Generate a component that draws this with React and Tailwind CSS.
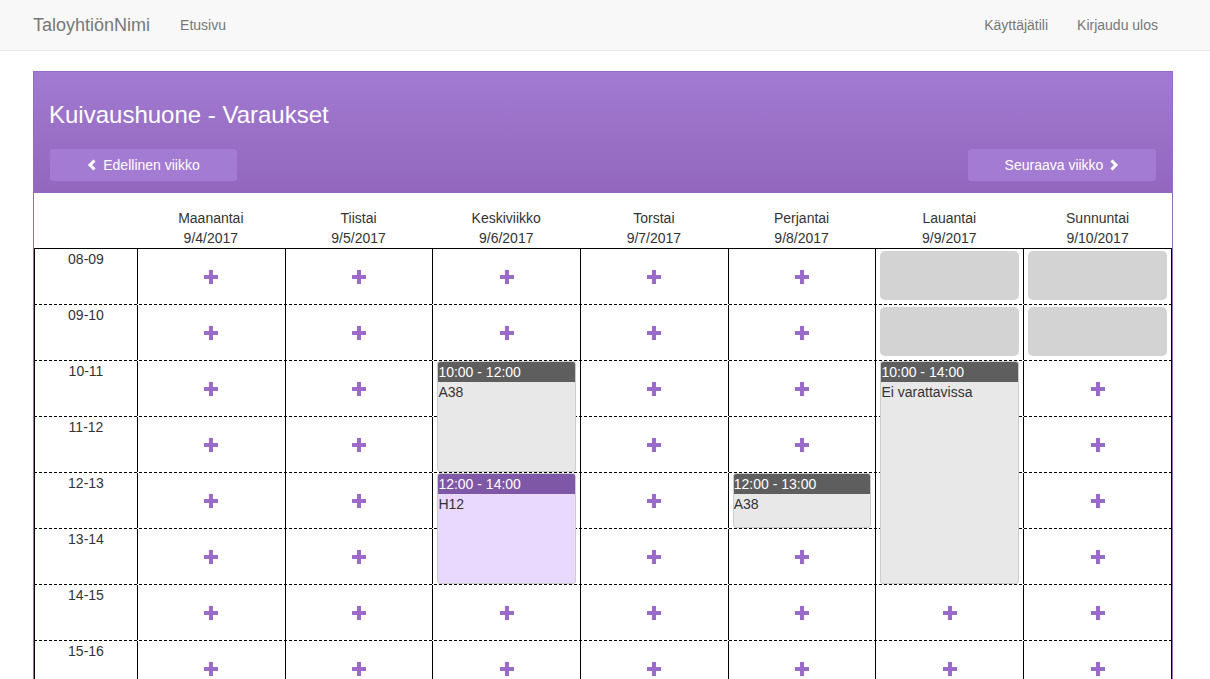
import React from 'react';

const days = [
  { name: 'Maanantai', date: '9/4/2017' },
  { name: 'Tiistai', date: '9/5/2017' },
  { name: 'Keskiviikko', date: '9/6/2017' },
  { name: 'Torstai', date: '9/7/2017' },
  { name: 'Perjantai', date: '9/8/2017' },
  { name: 'Lauantai', date: '9/9/2017' },
  { name: 'Sunnuntai', date: '9/10/2017' },
];

const hours = [8, 9, 10, 11, 12, 13, 14, 15, 16, 17, 18, 19, 20, 21];
const pad = n => String(n).padStart(2, '0');

// day index -> list of bookings (start hour, length in hours)
const bookings = [
  { day: 2, start: 10, len: 2, time: '10:00 - 12:00', text: 'A38', own: false },
  { day: 2, start: 12, len: 2, time: '12:00 - 14:00', text: 'H12', own: true },
  { day: 4, start: 12, len: 1, time: '12:00 - 13:00', text: 'A38', own: false },
  { day: 5, start: 10, len: 4, time: '10:00 - 14:00', text: 'Ei varattavissa', own: false },
];

const disabled = [
  { day: 5, hour: 8 }, { day: 5, hour: 9 },
  { day: 6, hour: 8 }, { day: 6, hour: 9 },
];

const PlusIcon = () => (
  <svg width="14" height="14" viewBox="0 0 14 14" className="block">
    <rect x="0" y="5" width="14" height="4" fill="#9b6bcc" />
    <rect x="5" y="0" width="4" height="14" fill="#9b6bcc" />
  </svg>
);

const Chevron = ({ dir }) => (
  <svg width="10" height="12" viewBox="0 0 10 12" className="block">
    {dir === 'left' ? (
      <polyline points="7.5,1.5 3,6 7.5,10.5" fill="none" stroke="white" strokeWidth="3" />
    ) : (
      <polyline points="2.5,1.5 7,6 2.5,10.5" fill="none" stroke="white" strokeWidth="3" />
    )}
  </svg>
);

const Booking = ({ b }) => (
  <div
    className={`absolute left-[4px] right-[4px] top-0 z-10 rounded-[3px] border border-[#cccccc] overflow-hidden ${b.own ? 'bg-[#ead9ff]' : 'bg-[#e8e8e8]'}`}
    style={{ height: b.len * 56 - 1 }}
  >
    <div className={`h-[20px] leading-[20px] text-white ${b.own ? 'bg-[#7e57a6]' : 'bg-[#5e5e5e]'}`}>{b.time}</div>
    <div className="leading-[20px] text-[#333]">{b.text}</div>
  </div>
);

const Cell = ({ day, hour, last }) => {
  const b = bookings.find(x => x.day === day && x.start === hour);
  const covered = bookings.some(x => x.day === day && hour >= x.start && hour < x.start + x.len);
  const isDisabled = disabled.some(x => x.day === day && x.hour === hour);
  return (
    <div className={`relative border-l border-black ${last ? 'border-r' : ''}`}>
      {b && <Booking b={b} />}
      {isDisabled && <div className="mx-[4px] mt-[2px] h-[49px] rounded-[5px] bg-[#d3d3d3]" />}
      {!covered && !isDisabled && (
        <div className="h-full flex items-center justify-center"><PlusIcon /></div>
      )}
    </div>
  );
};

export default function App() {
  return (
    <div className="min-h-screen bg-white text-[14px] text-[#333]" style={{ fontFamily: '"Liberation Sans", Arial, sans-serif' }}>
      {/* Navbar */}
      <nav className="h-[51px] bg-[#f8f8f8] border-b border-[#e7e7e7] flex items-center text-[#777]">
        <div className="pl-[33px] pr-[15px] text-[18px]">TaloyhtiönNimi</div>
        <div className="px-[15px]">Etusivu</div>
        <div className="flex-1" />
        <div className="pl-[15px] pr-[14px]">Käyttäjätili</div>
        <div className="pl-[15px] pr-[52px]">Kirjaudu ulos</div>
      </nav>

      {/* Panel */}
      <div className="ml-[33px] mt-[20px] w-[1140px] border border-[#9a6ac9] border-b-0">
        <div className="bg-gradient-to-b from-[#a27ad1] to-[#9267bd] px-[15px] pt-[30px] pb-[12px]">
          <h1 className="text-[24px] leading-[26px] text-white">Kuivaushuone - Varaukset</h1>
          <div className="mt-[21px] flex justify-between">
            <button className="w-[187px] h-[32px] ml-px rounded-[3px] bg-[#a47bd2] text-white flex items-center justify-center gap-[6px]">
              <Chevron dir="left" />
              <span>Edellinen viikko</span>
            </button>
            <button className="w-[188px] h-[32px] mr-px rounded-[3px] bg-[#a47bd2] text-white flex items-center justify-center gap-[6px]">
              <span>Seuraava viikko</span>
              <Chevron dir="right" />
            </button>
          </div>
        </div>

        {/* Header row */}
        <div className="grid grid-cols-[103px_repeat(6,147.7px)_1fr] pt-[15px] border-b border-black">
          <div />
          {days.map(d => (
            <div key={d.name} className="text-center leading-[20px]">
              <div>{d.name}</div>
              <div>{d.date}</div>
            </div>
          ))}
        </div>

        {/* Body */}
        {hours.map(h => (
          <div key={h} className="h-[56px] border-b border-dashed border-black">
            <div className="grid grid-cols-[103px_repeat(6,147.7px)_1fr] h-full">
              <div className="border-l border-black text-center leading-[20px]">{pad(h)}-{pad(h + 1)}</div>
              {days.map((d, i) => (
                <Cell key={d.name} day={i} hour={h} last={i === 6} />
              ))}
            </div>
          </div>
        ))}
      </div>
    </div>
  );
}
